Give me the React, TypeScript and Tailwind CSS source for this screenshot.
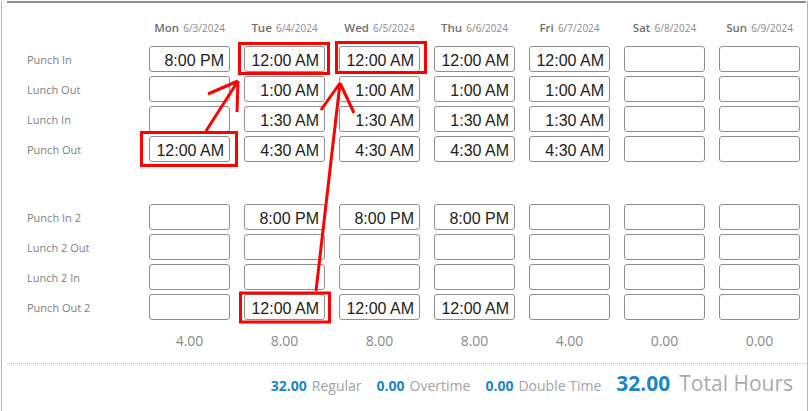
import React from "react";

const days = [
  ["Mon", "6/3/2024"],
  ["Tue", "6/4/2024"],
  ["Wed", "6/5/2024"],
  ["Thu", "6/6/2024"],
  ["Fri", "6/7/2024"],
  ["Sat", "6/8/2024"],
  ["Sun", "6/9/2024"],
];

const firstShift: [string, string[]][] = [
  ["Punch In", ["8:00 PM", "12:00 AM", "12:00 AM", "12:00 AM", "12:00 AM", "", ""]],
  ["Lunch Out", ["", "1:00 AM", "1:00 AM", "1:00 AM", "1:00 AM", "", ""]],
  ["Lunch In", ["", "1:30 AM", "1:30 AM", "1:30 AM", "1:30 AM", "", ""]],
  ["Punch Out", ["12:00 AM", "4:30 AM", "4:30 AM", "4:30 AM", "4:30 AM", "", ""]],
];

const secondShift: [string, string[]][] = [
  ["Punch In 2", ["", "8:00 PM", "8:00 PM", "8:00 PM", "", "", ""]],
  ["Lunch 2 Out", ["", "", "", "", "", "", ""]],
  ["Lunch 2 In", ["", "", "", "", "", "", ""]],
  ["Punch Out 2", ["", "12:00 AM", "12:00 AM", "12:00 AM", "", "", ""]],
];

const totals = ["4.00", "8.00", "8.00", "8.00", "4.00", "0.00", "0.00"];

function TimeBox({ value }: { value: string }) {
  return (
    <div className="h-[26px] border border-[#8f8f8f] rounded-[3px] bg-white flex items-center justify-end pr-[5px] pt-[3px] font-['Liberation_Sans',Arial,sans-serif] text-[16px] leading-[18px] text-[#222]">
      {value}
    </div>
  );
}

function ShiftBlock({ rows }: { rows: [string, string[]][] }) {
  return (
    <div className="grid grid-cols-[108px_repeat(7,81px)] gap-x-[14px] gap-y-[4px]">
      {rows.map(([label, values]) => (
        <React.Fragment key={label}>
          <div className="h-[26px] flex items-center pt-[2px] text-[11px] text-[#7f7f7f]">{label}</div>
          {values.map((v, i) => (
            <TimeBox key={i} value={v} />
          ))}
        </React.Fragment>
      ))}
    </div>
  );
}

function Annotations() {
  return (
    <svg className="absolute inset-0 pointer-events-none" width="811" height="411" viewBox="0 0 811 411">
      <g fill="none" stroke="#ff0000" strokeWidth="3">
        <rect x="239.5" y="43.5" width="89" height="30" />
        <rect x="336.5" y="42.5" width="89" height="30" />
        <rect x="141.5" y="132.5" width="95" height="33" />
        <rect x="240.5" y="293" width="89" height="29" />
        <path d="M206 131 L238 81 M238 81 L208 94 M238 81 L237 112" strokeLinecap="butt" />
        <path d="M316 291 L340 83 M340 83 L321 110 M340 83 L354 113" strokeLinecap="butt" />
      </g>
    </svg>
  );
}

export default function App() {
  return (
    <div className="relative w-[811px] h-[411px] bg-white overflow-hidden font-['Open_Sans',sans-serif]">
      <div className="ml-[1px] w-[807px] h-full border-l border-r border-[#b4b4b4]">
        {/* top rule */}
        <div className="mt-[1px] ml-[5px] mr-[1px] h-[2px] bg-[#8c8c8c]" />

        <div className="pl-[25px]">
          {/* Day headers */}
          <div className="mt-[11px] h-[20px] grid grid-cols-[108px_repeat(7,81px)] gap-x-[14px] items-center">
            <div />
            {days.map(([d, date]) => (
              <div key={d} className="text-center whitespace-nowrap">
                <span className="text-[11.5px] font-semibold text-[#6f6f6f]">{d}</span>{" "}
                <span className="text-[10px] text-[#8a8a8a]">{date}</span>
              </div>
            ))}
          </div>

          <div className="mt-[12px]">
            <ShiftBlock rows={firstShift} />
          </div>
          <div className="mt-[42px]">
            <ShiftBlock rows={secondShift} />
          </div>

          {/* daily totals */}
          <div className="mt-[10px] h-[20px] grid grid-cols-[108px_repeat(7,81px)] gap-x-[14px] items-center">
            <div />
            {totals.map((t, i) => (
              <div key={i} className="text-center text-[14px] text-[#8a8a8a]">
                {t}
              </div>
            ))}
          </div>
        </div>

        {/* dotted separator */}
        <div className="mt-[13px] ml-[5px] mr-[1px] border-t border-dotted border-[#c4c4c4]" />

        {/* summary */}
        <div className="mt-[5px] pr-[14px] flex justify-end items-baseline gap-[15px] leading-[28px]">
          <div className="text-[14px]">
            <span className="font-bold text-[#1b87c2]">32.00</span>
            <span className="ml-[5px] text-[#a3a3a3]">Regular</span>
          </div>
          <div className="text-[14px]">
            <span className="font-bold text-[#1b87c2]">0.00</span>
            <span className="ml-[5px] text-[#a3a3a3]">Overtime</span>
          </div>
          <div className="text-[14px]">
            <span className="font-bold text-[#1b87c2]">0.00</span>
            <span className="ml-[5px] text-[#a3a3a3]">Double Time</span>
          </div>
          <div className="text-[21px]">
            <span className="font-bold text-[#1b87c2]">32.00</span>
            <span className="ml-[9px] text-[#ababab]">Total Hours</span>
          </div>
        </div>
      </div>
      <Annotations />
    </div>
  );
}
